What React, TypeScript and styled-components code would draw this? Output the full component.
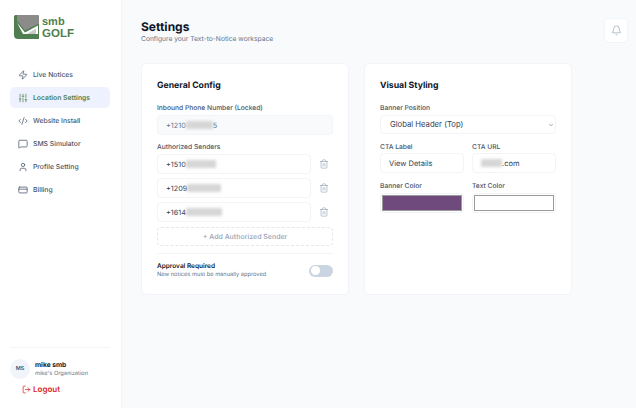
import { createGlobalStyle } from "styled-components";
import styled from "styled-components";
import {
  Bell,
  ChevronDown,
  CodeXml,
  CreditCard,
  LogOut,
  MessageSquare,
  SlidersVertical,
  Trash2,
  User,
  Zap,
} from "lucide-react";

const GlobalStyle = createGlobalStyle`
  html, body {
    margin: 0;
    padding: 0;
    height: 100%;
    background: #f8fafc;
  }
  body {
    font-family: Inter, "Liberation Sans", sans-serif;
    color: #0f172a;
    text-rendering: geometricPrecision;
  }
  * {
    box-sizing: border-box;
  }
`;

const navItems = [
  { label: "Live Notices", icon: Zap },
  { label: "Location Settings", icon: SlidersVertical, active: true },
  { label: "Website Install", icon: CodeXml },
  { label: "SMS Simulator", icon: MessageSquare },
  { label: "Profile Setting", icon: User },
  { label: "Billing", icon: CreditCard },
];

const senders = [
  { prefix: "+1510", width: 30 },
  { prefix: "+1209", width: 34 },
  { prefix: "+1614", width: 36 },
];

function Logo() {
  return (
    <LogoWrap>
      <svg width="25" height="25" viewBox="0 0 25 25">
        <path d="M0 1.500A1.500 1.500 0 0 1 1.500 0H23.500A1.500 1.500 0 0 1 25 1.500V24H4a4 4 0 0 1-4-4z" fill="#4f7f50" />
        <path d="M3 7.500 11 17.500 24 10.500V19H9z" fill="#ffffff" />
        <path d="M3 0H23.500A1.500 1.500 0 0 1 25 1.500V8.500L11 15.500 4 7 3 6z" fill="#8b8b89" />
        <path d="M13 19 22 13.500V19z" fill="#c9c9c6" />
      </svg>
      <LogoText>
        <LogoTop>smb</LogoTop>
        <LogoBottom>GOLF</LogoBottom>
      </LogoText>
    </LogoWrap>
  );
}

function App() {
  return (
    <>
      <GlobalStyle />
      <Page>
        <Sidebar>
          <Logo />
          <Nav>
            {navItems.map((item) => (
              <NavItem key={item.label} $active={item.active}>
                <item.icon size={10} strokeWidth={1.8} />
                {item.label}
              </NavItem>
            ))}
          </Nav>
          <Account>
            <UserRow>
              <Avatar>MS</Avatar>
              <div>
                <UserName>mike smb</UserName>
                <OrgName>mike's Organization</OrgName>
              </div>
            </UserRow>
            <Logout>
              <LogOut size={9} strokeWidth={2} />
              Logout
            </Logout>
          </Account>
        </Sidebar>
        <Main>
          <Header>
            <div>
              <Title>Settings</Title>
              <Subtitle>Configure your Text-to-Notice workspace</Subtitle>
            </div>
            <BellButton>
              <Bell size={11} strokeWidth={1.5} />
            </BellButton>
          </Header>
          <Cards>
            <Card>
              <CardTitle>General Config</CardTitle>
              <Label>Inbound Phone Number (Locked)</Label>
              <LockedField>
                +1210
                <Smudge $width={27} />5
              </LockedField>
              <SendersLabel>Authorized Senders</SendersLabel>
              <Senders>
                {senders.map((sender) => (
                  <SenderRow key={sender.prefix}>
                    <Field>
                      {sender.prefix}
                      <Smudge $width={sender.width} />
                    </Field>
                    <Trash2 size={10} strokeWidth={1.5} color="#94a3b8" />
                  </SenderRow>
                ))}
              </Senders>
              <AddButton>+ Add Authorized Sender</AddButton>
              <ApprovalRow>
                <div>
                  <ApprovalTitle>Approval Required</ApprovalTitle>
                  <ApprovalHint>New notices must be manually approved</ApprovalHint>
                </div>
                <Toggle />
              </ApprovalRow>
            </Card>
            <Card>
              <CardTitle>Visual Styling</CardTitle>
              <Label>Banner Position</Label>
              <SelectWrap>
                <PositionSelect defaultValue="top">
                  <option value="top">Global Header (Top)</option>
                </PositionSelect>
                <SelectChevron size={6} strokeWidth={2} />
              </SelectWrap>
              <TwoCols>
                <div>
                  <CtaLabel>CTA Label</CtaLabel>
                  <CtaField>View Details</CtaField>
                </div>
                <div>
                  <CtaLabel>CTA URL</CtaLabel>
                  <CtaField>
                    <Smudge $width={21} />
                    .com
                  </CtaField>
                </div>
              </TwoCols>
              <TwoCols>
                <div>
                  <Label>Banner Color</Label>
                  <ColorField>
                    <Swatch $color="#6f4a7c" />
                  </ColorField>
                </div>
                <div>
                  <Label>Text Color</Label>
                  <ColorField>
                    <Swatch $color="#ffffff" />
                  </ColorField>
                </div>
              </TwoCols>
            </Card>
          </Cards>
        </Main>
      </Page>
    </>
  );
}

const Page = styled.div`
  display: flex;
  width: 636px;
  height: 408px;
  overflow: hidden;
`;

const Sidebar = styled.aside`
  display: flex;
  flex-direction: column;
  flex: 0 0 122px;
  padding: 15px 11px 0 10px;
  background: #fff;
  border-right: 1px solid #f1f5f9;
`;

const LogoWrap = styled.div`
  display: flex;
  align-items: center;
  gap: 3px;
  height: 25px;
  margin-left: 4px;
`;

const LogoText = styled.div`
  display: flex;
  flex-direction: column;
  font-family: "Liberation Sans", sans-serif;
  font-weight: 700;
  color: #4f7f50;
`;

const LogoTop = styled.span`
  font-size: 11px;
  line-height: 12px;
`;

const LogoBottom = styled.span`
  font-size: 11.500px;
  line-height: 12px;
`;

const Nav = styled.nav`
  display: flex;
  flex-direction: column;
  gap: 2px;
  margin-top: 24px;
`;

const NavItem = styled.a<{ $active?: boolean }>`
  display: flex;
  align-items: center;
  gap: 5px;
  height: 21px;
  padding-left: 8px;
  border-radius: 5px;
  font-size: 6.800px;
  font-weight: ${({ $active }) => ($active ? 600 : 500)};
  color: ${({ $active }) => ($active ? "#4f7f50" : "#475569")};
  background: ${({ $active }) => ($active ? "#eef2ff" : "transparent")};
`;

const Account = styled.div`
  margin-top: auto;
  height: 61px;
  padding-top: 11px;
  border-top: 1px solid #f1f5f9;
`;

const UserRow = styled.div`
  display: flex;
  align-items: center;
  gap: 5px;
`;

const Avatar = styled.div`
  display: flex;
  align-items: center;
  justify-content: center;
  width: 20px;
  height: 20px;
  border-radius: 50%;
  background: #f1f5f9;
  font-size: 5.500px;
  font-weight: 600;
  color: #475569;
`;

const UserName = styled.div`
  font-size: 6.700px;
  line-height: 9px;
  font-weight: 700;
`;

const OrgName = styled.div`
  font-size: 5.700px;
  line-height: 8px;
  color: #64748b;
`;

const Logout = styled.div`
  display: flex;
  align-items: center;
  gap: 2px;
  margin: 5px 0 0 12px;
  font-size: 8px;
  font-weight: 600;
  color: #dc2626;
`;

const Main = styled.main`
  flex: 1;
  padding: 18px 8px 0 19px;
`;

const Header = styled.header`
  display: flex;
  justify-content: space-between;
  align-items: flex-start;
  height: 45px;
`;

const Title = styled.h1`
  margin: 0;
  font-size: 12px;
  line-height: 17px;
  font-weight: 700;
`;

const Subtitle = styled.p`
  margin: 0;
  font-size: 6.700px;
  line-height: 8px;
  color: #64748b;
`;

const BellButton = styled.div`
  display: flex;
  align-items: center;
  justify-content: center;
  width: 24px;
  height: 25px;
  border: 1px solid #f1f5f9;
  border-radius: 4px;
  background: #fff;
  color: #94a3b8;
`;

const Cards = styled.div`
  display: grid;
  grid-template-columns: 208px 208px;
  gap: 15px;
`;

const Card = styled.section`
  height: 232px;
  padding: 16px 15px;
  background: #fff;
  border: 1px solid #f1f5f9;
  border-radius: 5px;
`;

const CardTitle = styled.h2`
  margin: 0 0 12px;
  font-size: 8.700px;
  line-height: 12px;
  font-weight: 700;
`;

const Label = styled.label`
  display: block;
  margin-bottom: 3px;
  font-size: 6.700px;
  line-height: 8px;
  font-weight: 500;
  color: #475569;
`;

const CtaLabel = styled(Label)`
  margin-bottom: 2px;
`;

const Field = styled.div`
  display: flex;
  align-items: center;
  flex: 1;
  height: 20px;
  padding-left: 8px;
  border: 1px solid #f1f5f9;
  border-radius: 4px;
  background: #fff;
  font-size: 7.300px;
  color: #334155;
`;

const LockedField = styled(Field)`
  background: #f8fafc;
  color: #64748b;
`;

const Smudge = styled.span<{ $width: number }>`
  display: inline-block;
  width: ${({ $width }) => $width}px;
  height: 8px;
  background: #d6d6d6;
  filter: blur(1.500px);
`;

const SendersLabel = styled(Label)`
  margin-top: 8px;
`;

const Senders = styled.div`
  display: flex;
  flex-direction: column;
  gap: 4px;
`;

const SenderRow = styled.div`
  display: flex;
  align-items: center;
  gap: 8px;
  padding-right: 4px;
`;

const AddButton = styled.div`
  display: flex;
  align-items: center;
  justify-content: center;
  height: 19px;
  margin-top: 5px;
  border: 1px dashed #e2e8f0;
  border-radius: 4px;
  font-size: 7px;
  font-weight: 500;
  color: #94a3b8;
`;

const ApprovalRow = styled.div`
  display: flex;
  align-items: center;
  justify-content: space-between;
  margin-top: 7px;
  padding-top: 8px;
  border-top: 1px solid #f1f5f9;
`;

const ApprovalTitle = styled.div`
  font-size: 6.500px;
  line-height: 9px;
  font-weight: 600;
`;

const ApprovalHint = styled.div`
  font-size: 5.700px;
  line-height: 8px;
  color: #64748b;
`;

const Toggle = styled.div`
  position: relative;
  width: 24px;
  height: 12px;
  border-radius: 6px;
  background: #cbd5e1;

  &::after {
    content: "";
    position: absolute;
    top: 1.500px;
    left: 2px;
    width: 9px;
    height: 9px;
    border-radius: 50%;
    background: #fff;
  }
`;

const SelectWrap = styled.div`
  position: relative;
`;

const PositionSelect = styled.select`
  display: block;
  width: 100%;
  height: 19px;
  padding-left: 9px;
  border: 1px solid #f1f5f9;
  border-radius: 4px;
  background: #fff;
  font-family: inherit;
  font-size: 7.700px;
  color: #334155;
  appearance: none;
`;

const SelectChevron = styled(ChevronDown)`
  position: absolute;
  top: 6.500px;
  right: 2px;
  color: #475569;
`;

const TwoCols = styled.div`
  display: grid;
  grid-template-columns: 84px 84px;
  gap: 8px;
  margin-top: 9px;
`;

const CtaField = styled(Field)`
  font-size: 7.500px;
`;

const ColorField = styled.div`
  height: 20px;
  padding: 1px;
  border: 1px solid #f1f5f9;
  border-radius: 3px;
`;

const Swatch = styled.div<{ $color: string }>`
  height: 100%;
  background: ${({ $color }) => $color};
  border: 1px solid #9a9a9a;
`;

export default App;
